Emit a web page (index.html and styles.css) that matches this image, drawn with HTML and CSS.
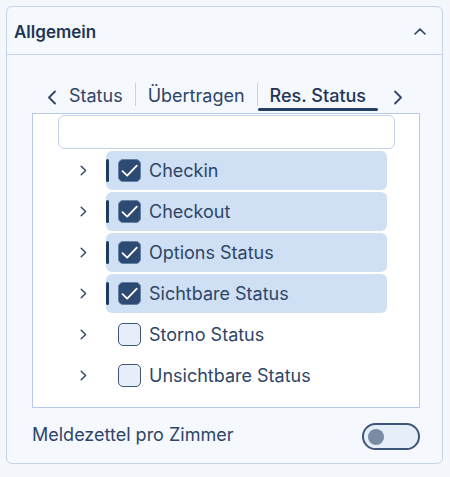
FILE: index.html
```html
<!DOCTYPE html>
<html lang="de">
<head>
<meta charset="utf-8">
<link rel="stylesheet" href="styles.css">
</head>
<body>
<div class="card">
  <div class="header">
    <span class="title">Allgemein</span>
    <svg class="chev-up" width="12" height="7" viewBox="0 0 12 7"><path d="M1 6 L6 1.2 L11 6" fill="none" stroke="#2e4568" stroke-width="1.6" stroke-linecap="round" stroke-linejoin="round"/></svg>
  </div>
  <div class="content">
    <div class="tabs">
      <svg class="arrow left" width="10" height="15" viewBox="0 0 10 15"><path d="M8 1.5 L2 7.5 L8 13.5" fill="none" stroke="#2e4568" stroke-width="1.8" stroke-linecap="round" stroke-linejoin="round"/></svg>
      <span class="tab">Status</span>
      <span class="sep"></span>
      <span class="tab">Übertragen</span>
      <span class="sep"></span>
      <span class="tab active">Res. Status</span>
      <svg class="arrow right" width="10" height="15" viewBox="0 0 10 15"><path d="M2 1.5 L8 7.5 L2 13.5" fill="none" stroke="#2e4568" stroke-width="1.8" stroke-linecap="round" stroke-linejoin="round"/></svg>
    </div>
    <div class="tree">
      <div class="search"></div>
      <div class="row">
        <span class="exp"><svg width="7" height="11" viewBox="0 0 7 11"><path d="M1.2 1.2 L5.6 5.5 L1.2 9.8" fill="none" stroke="#2e4568" stroke-width="1.4" stroke-linecap="round" stroke-linejoin="round"/></svg></span>
        <div class="item sel"><span class="bar"></span><span class="cb on"><svg width="20" height="20" viewBox="0 0 20 20"><path d="M2.5 10.2 L7.2 14.6 L16.8 4.6" fill="none" stroke="#fff" stroke-width="1.8" stroke-linecap="round" stroke-linejoin="round"/></svg></span><span class="label">Checkin</span></div>
      </div>
      <div class="row">
        <span class="exp"><svg width="7" height="11" viewBox="0 0 7 11"><path d="M1.2 1.2 L5.6 5.5 L1.2 9.8" fill="none" stroke="#2e4568" stroke-width="1.4" stroke-linecap="round" stroke-linejoin="round"/></svg></span>
        <div class="item sel"><span class="bar"></span><span class="cb on"><svg width="20" height="20" viewBox="0 0 20 20"><path d="M2.5 10.2 L7.2 14.6 L16.8 4.6" fill="none" stroke="#fff" stroke-width="1.8" stroke-linecap="round" stroke-linejoin="round"/></svg></span><span class="label">Checkout</span></div>
      </div>
      <div class="row">
        <span class="exp"><svg width="7" height="11" viewBox="0 0 7 11"><path d="M1.2 1.2 L5.6 5.5 L1.2 9.8" fill="none" stroke="#2e4568" stroke-width="1.4" stroke-linecap="round" stroke-linejoin="round"/></svg></span>
        <div class="item sel"><span class="bar"></span><span class="cb on"><svg width="20" height="20" viewBox="0 0 20 20"><path d="M2.5 10.2 L7.2 14.6 L16.8 4.6" fill="none" stroke="#fff" stroke-width="1.8" stroke-linecap="round" stroke-linejoin="round"/></svg></span><span class="label">Options Status</span></div>
      </div>
      <div class="row">
        <span class="exp"><svg width="7" height="11" viewBox="0 0 7 11"><path d="M1.2 1.2 L5.6 5.5 L1.2 9.8" fill="none" stroke="#2e4568" stroke-width="1.4" stroke-linecap="round" stroke-linejoin="round"/></svg></span>
        <div class="item sel"><span class="bar"></span><span class="cb on"><svg width="20" height="20" viewBox="0 0 20 20"><path d="M2.5 10.2 L7.2 14.6 L16.8 4.6" fill="none" stroke="#fff" stroke-width="1.8" stroke-linecap="round" stroke-linejoin="round"/></svg></span><span class="label">Sichtbare Status</span></div>
      </div>
      <div class="row">
        <span class="exp"><svg width="7" height="11" viewBox="0 0 7 11"><path d="M1.2 1.2 L5.6 5.5 L1.2 9.8" fill="none" stroke="#2e4568" stroke-width="1.4" stroke-linecap="round" stroke-linejoin="round"/></svg></span>
        <div class="item"><span class="bar"></span><span class="cb"></span><span class="label">Storno Status</span></div>
      </div>
      <div class="row">
        <span class="exp"><svg width="7" height="11" viewBox="0 0 7 11"><path d="M1.2 1.2 L5.6 5.5 L1.2 9.8" fill="none" stroke="#2e4568" stroke-width="1.4" stroke-linecap="round" stroke-linejoin="round"/></svg></span>
        <div class="item"><span class="bar"></span><span class="cb"></span><span class="label">Unsichtbare Status</span></div>
      </div>
    </div>
    <div class="footer">
      <span class="flabel">Meldezettel pro Zimmer</span>
      <span class="toggle"><span class="knob"></span></span>
    </div>
  </div>
</div>
</body>
</html>
```

FILE: styles.css
```css
* { box-sizing: border-box; }
body {
  margin: 0;
  background: #f4f7fc;
  font-family: Inter, "Noto Sans", sans-serif;
  color: #2e4568;
}
.card {
  margin: 6px 0 0 6px;
  width: 437px;
  height: 458px;
  border: 1px solid #c3d4ea;
  border-radius: 6px;
  background: #f5f8fc;
}
.header {
  height: 48px;
  border-bottom: 1px solid #c3d4ea;
  display: flex;
  align-items: center;
  justify-content: space-between;
  padding: 2px 16px 0 7px;
}
.title {
  font-size: 17px;
  font-weight: 600;
  color: #1f3556;
}
.chev-up { display: block; margin-top: 0; }
.content {
  padding: 28px 22px 0 25px;
}
.tabs {
  display: flex;
  align-items: center;
  justify-content: center;
  height: 28px;
  padding-left: 3px;
  padding-right: 5px;
}
.arrow { display: block; }
.arrow.left { margin-right: 0; }
.arrow.right { margin-left: 15px; }
.tab {
  position: relative;
  height: 28px;
  padding: 0 12px;
  font-size: 18px;
  line-height: 25px;
  color: #2e4568;
}
.tab.active { color: #1f3556; font-weight: 500; }
.tab.active::after {
  content: "";
  position: absolute;
  left: 0;
  right: 0;
  bottom: 0;
  height: 3px;
  border-radius: 2px;
  background: #243f63;
}
.sep {
  width: 1px;
  height: 23px;
  margin-bottom: 5px;
  background: #c3d2e6;
}
.tree {
  margin-top: 2px;
  height: 295px;
  border: 1px solid #b4cae6;
  background: #fff;
  padding: 1px 24px 0 25px;
}
.search {
  height: 34px;
  border: 1px solid #c2d3ea;
  border-radius: 6px;
  background: #fff;
  margin-bottom: 2px;
}
.row {
  display: flex;
  height: 39px;
  margin-bottom: 2px;
  margin-left: -25px;
}
.exp {
  width: 73px;
  display: flex;
  align-items: center;
  justify-content: flex-start;
  padding-left: 47px;
}
.exp svg { display: block; }
.item {
  width: 281px;
  display: flex;
  align-items: center;
  border-radius: 6px;
}
.item.sel { background: #cfe0f5; }
.bar {
  width: 3px;
  height: 23px;
  border-radius: 2px;
  margin-right: 9px;
}
.item.sel .bar { background: #1f3a5f; }
.cb {
  width: 23px;
  height: 23px;
  border-radius: 5px;
  border: 1.5px solid #3d5679;
  background: #e6eef9;
  display: flex;
  align-items: center;
  justify-content: center;
  margin-right: 8px;
}
.cb.on {
  background: #2c4a72;
  border-color: #6580a6;
}
.cb svg { display: block; }
.label {
  font-size: 18px;
  color: #2e4568;
}
.footer {
  display: flex;
  align-items: center;
  justify-content: space-between;
  margin-top: 15px;
}
.flabel {
  font-size: 18px;
  color: #2e4568;
  margin-top: -4px;
}
.toggle {
  width: 58px;
  height: 27px;
  border: 2px solid #3d5679;
  border-radius: 14px;
  background: #e6eef9;
  display: flex;
  align-items: center;
  padding-left: 4px;
}
.knob {
  width: 16px;
  height: 16px;
  border-radius: 50%;
  background: #7a8ba6;
}
```
